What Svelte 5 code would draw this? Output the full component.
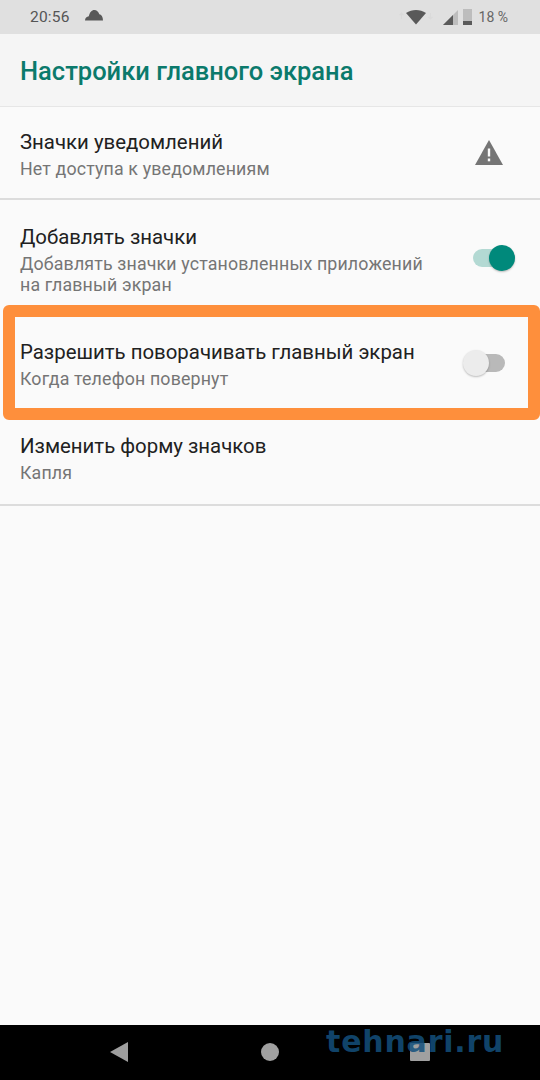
<script lang="ts">
  const rows = [
    { title: 'Значки уведомлений', sub: 'Нет доступа к уведомлениям', kind: 'warning', cls: 'r1' },
    {
      title: 'Добавлять значки',
      sub: 'Добавлять значки установленных приложений на главный экран',
      kind: 'on',
      cls: 'r2',
    },
    { title: 'Разрешить поворачивать главный экран', sub: 'Когда телефон повернут', kind: 'off', cls: 'r3' },
    { title: 'Изменить форму значков', sub: 'Капля', kind: '', cls: 'r4' },
  ];
</script>

<div class="screen">
  <div class="status">
    <div class="status-left">
      <span class="time">20:56</span>
      <svg width="18" height="12" viewBox="0 0 18 12" class="cloud">
        <path d="M0 11.500c0-2.600 1.800-4 3.800-4.200C4.600 3.300 6.800 1 9.300 1c2.400 0 4.200 1.800 5 4.300 2 .3 3.700 2.600 3.700 6.200z" fill="#595959" />
      </svg>
    </div>
    <div class="status-right">
      <svg width="34" height="15" viewBox="0 0 34 15">
        <path d="M7 3 17 14.500 27 3C24 1 20.500 0 17 0S10 1 7 3z" fill="#595959" />
        <path d="M2.500 3v6M0.500 5 2.500 3l2 2M31.500 9V3M29.500 7l2 2 2-2" stroke="#dadada" stroke-width="1.200" fill="none" />
      </svg>
      <svg width="15" height="15" viewBox="0 0 15 15" class="signal">
        <path d="M0 15 15 0v15z" fill="#bdbdbd" />
        <path d="M0 15 10 5v10z" fill="#5a5a5a" />
      </svg>
      <div class="battery"><div class="battery-level"></div></div>
      <span class="percent">18 %</span>
    </div>
  </div>

  <header class="toolbar">Настройки главного экрана</header>

  <main class="list">
    {#each rows as row}
      <section class="row {row.cls}">
        <div class="text">
          <div class="title">{row.title}</div>
          <div class="sub">{row.sub}</div>
        </div>
        {#if row.kind === 'warning'}
          <svg class="warn" width="28" height="25" viewBox="0 0 28 25">
            <path d="M14 0 28 25H0z" fill="#757575" />
            <rect x="12.800" y="8.500" width="2.400" height="8" fill="#fafafa" />
            <rect x="12.800" y="18.500" width="2.400" height="2.800" fill="#fafafa" />
          </svg>
        {:else if row.kind}
          <div class="switch {row.kind}"><span class="track"></span><span class="thumb"></span></div>
        {/if}
      </section>
    {/each}
    <div class="highlight"></div>
  </main>

  <nav class="navbar">
    <svg width="20" height="22" viewBox="0 0 20 22" class="back"><path d="M19 1v20L1 11z" fill="#9e9e9e" /></svg>
    <span class="home"></span>
    <span class="recent"></span>
    <span class="mark">tehnari.ru</span>
  </nav>
</div>

<style>
  :global(body) {
    margin: 0;
    background: #fafafa;
  }

  .screen {
    position: relative;
    display: flex;
    flex-direction: column;
    width: 540px;
    height: 1080px;
    overflow: hidden;
    font-family: Roboto, "Noto Sans", sans-serif;
    background: #fafafa;
  }

  .status {
    display: flex;
    align-items: center;
    justify-content: space-between;
    flex: none;
    height: 34px;
    padding: 0 32px 0 30px;
    background: #e0e0e0;
    color: #555;
  }

  .status-left,
  .status-right {
    display: flex;
    align-items: center;
  }

  .time {
    font-size: 15.500px;
    letter-spacing: 0.2px;
  }

  .cloud {
    margin: -4px 0 0 15px;
  }

  .signal {
    margin-left: 10px;
  }

  .battery {
    display: flex;
    align-items: flex-end;
    width: 9px;
    height: 16px;
    margin-left: 5px;
    background: #bdbdbd;
  }

  .battery-level {
    width: 100%;
    height: 4px;
    background: #5a5a5a;
  }

  .percent {
    margin-left: 7px;
    font-size: 14px;
    color: #666;
  }

  .toolbar {
    flex: none;
    height: 73px;
    box-sizing: border-box;
    padding: 21px 20px 0;
    font-size: 25.500px;
    font-weight: 500;
    line-height: 32px;
    color: #0b7a6c;
    background: #f5f5f5;
    border-bottom: 1px solid #e6e6e6;
  }

  .list {
    position: relative;
    display: flex;
    flex-direction: column;
    flex: 1;
  }

  .row {
    display: flex;
    align-items: center;
    justify-content: space-between;
    box-sizing: border-box;
    padding: 0 25px 0 20px;
  }

  .r1 {
    height: 93px;
    border-bottom: 2px solid #dcdcdc;
  }

  .r2 {
    height: 116px;
  }

  .r3 {
    height: 94px;
  }

  .r4 {
    height: 96px;
    border-bottom: 2px solid #dcdcdc;
  }

  .text {
    max-width: 415px;
  }

  .title {
    font-size: 20.400px;
    line-height: 30px;
    color: #212121;
  }

  .sub {
    margin-top: 1px;
    font-size: 17.800px;
    line-height: 21px;
    letter-spacing: 0.15px;
    color: #757575;
  }

  .warn {
    margin-right: 12px;
  }

  .switch {
    position: relative;
    flex: none;
    width: 52px;
    height: 26px;
  }

  .track {
    position: absolute;
    left: 10px;
    top: 4px;
    width: 32px;
    height: 18px;
    border-radius: 9px;
    background: #b3d9d3;
  }

  .thumb {
    position: absolute;
    top: 0;
    left: 26px;
    width: 26px;
    height: 26px;
    border-radius: 50%;
    background: #00897b;
    box-shadow: 0 1px 2px rgba(0, 0, 0, 0.25);
  }

  .off .track {
    background: #b9b9b9;
  }

  .off .thumb {
    left: 0;
    background: #ececec;
  }

  .highlight {
    position: absolute;
    left: 3px;
    top: 198px;
    width: 513px;
    height: 91px;
    border: 12px solid #fe8f3c;
    border-radius: 6px;
  }

  .navbar {
    position: relative;
    display: flex;
    flex: none;
    align-items: center;
    height: 55px;
    background: #000;
  }

  .back {
    position: absolute;
    left: 109px;
    top: 16px;
  }

  .home {
    position: absolute;
    left: 261px;
    top: 18px;
    width: 18px;
    height: 18px;
    border-radius: 50%;
    background: #a0a0a0;
  }

  .recent {
    position: absolute;
    left: 410px;
    top: 18px;
    width: 20px;
    height: 18px;
    border-radius: 1px;
    background: #a0a0a0;
  }

  .mark {
    position: absolute;
    left: 326px;
    top: 0;
    font-family: "DejaVu Sans", sans-serif;
    font-size: 30px;
    font-weight: 700;
    line-height: 34px;
    letter-spacing: 0.8px;
    color: rgba(20, 80, 125, 0.85);
  }
</style>
